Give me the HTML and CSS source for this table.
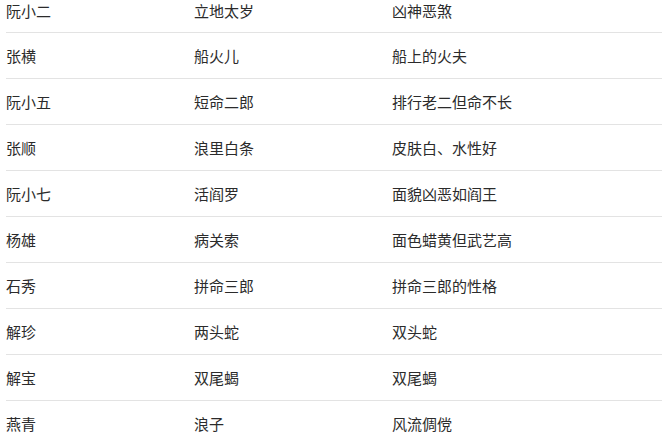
FILE: index.html
```html
<!DOCTYPE html>
<html lang="zh">
<head>
<meta charset="utf-8">
<link rel="stylesheet" href="styles.css">
</head>
<body>
<div class="table">
  <div class="row first"><span>阮小二</span><span>立地太岁</span><span>凶神恶煞</span></div>
  <div class="row"><span>张横</span><span>船火儿</span><span>船上的火夫</span></div>
  <div class="row"><span>阮小五</span><span>短命二郎</span><span>排行老二但命不长</span></div>
  <div class="row"><span>张顺</span><span>浪里白条</span><span>皮肤白、水性好</span></div>
  <div class="row"><span>阮小七</span><span>活阎罗</span><span>面貌凶恶如阎王</span></div>
  <div class="row"><span>杨雄</span><span>病关索</span><span>面色蜡黄但武艺高</span></div>
  <div class="row"><span>石秀</span><span>拼命三郎</span><span>拼命三郎的性格</span></div>
  <div class="row"><span>解珍</span><span>两头蛇</span><span>双头蛇</span></div>
  <div class="row"><span>解宝</span><span>双尾蝎</span><span>双尾蝎</span></div>
  <div class="row"><span>燕青</span><span>浪子</span><span>风流倜傥</span></div>
</div>
</body>
</html>
```
FILE: styles.css
```css
html, body {
  margin: 0;
  padding: 0;
  background: #fff;
  overflow: hidden;
}
body {
  font-family: "Noto Sans CJK SC", "Noto Sans", sans-serif;
  font-size: 15px;
  line-height: 16px;
  color: #2b2b2b;
}
.table {
  margin-left: 6px;
  margin-right: 1px;
}
.row {
  display: grid;
  grid-template-columns: 188px 198px 1fr;
  align-items: center;
  height: 45px;
  border-bottom: 1px solid #e3e3e3;
}
.row.first {
  height: 21px;
  padding-bottom: 11px;
}
.row:last-child {
  border-bottom: none;
}
```
